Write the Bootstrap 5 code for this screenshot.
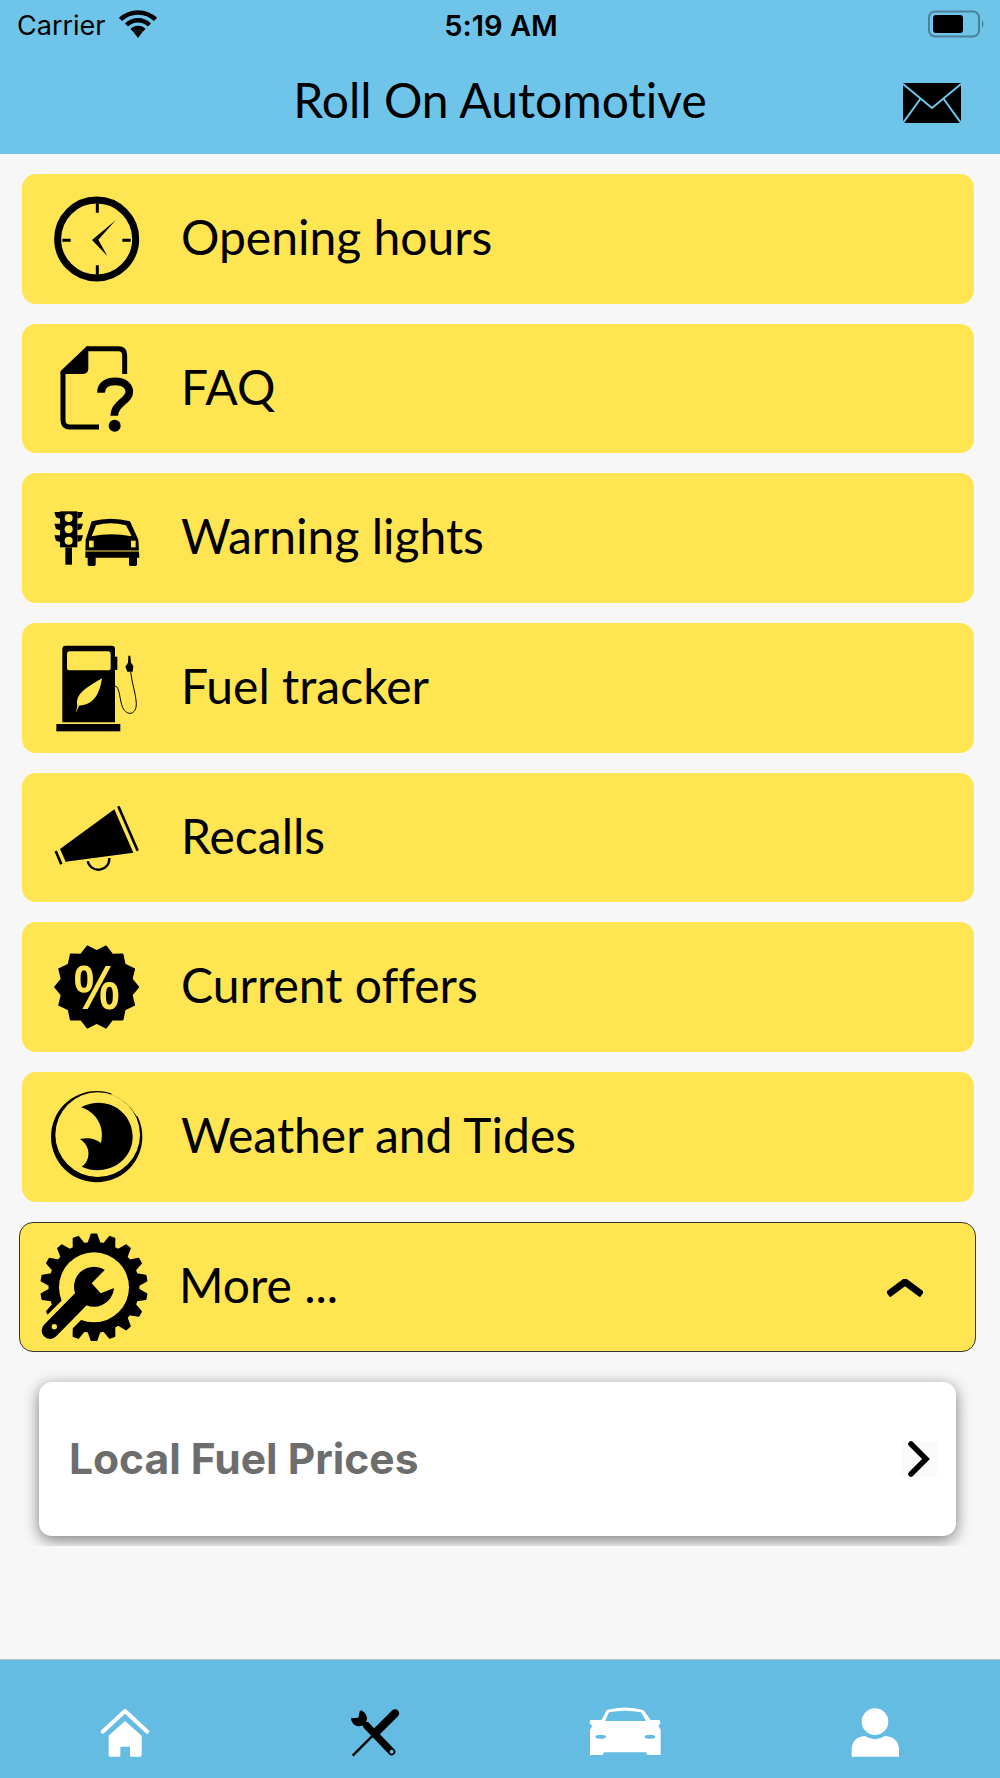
<!DOCTYPE html>
<html lang="en">
<head>
    <meta charset="UTF-8">
    <meta name="viewport" content="width=device-width, initial-scale=1">
    <title>Roll On Automotive</title>

    <!-- Bootstrap CSS -->
    <link href="https://cdn.jsdelivr.net/npm/bootstrap@5.3.0/dist/css/bootstrap.min.css" rel="stylesheet">
    <script src="https://cdn.jsdelivr.net/npm/bootstrap@5.3.0/dist/js/bootstrap.bundle.min.js"></script>

    <style>
        body {
            background-color: #f7f7f7;
            color: #000;
            font-family: "Lato", "Liberation Sans", sans-serif;
            font-variant-ligatures: none;
        }
        .app-top {
            background: #6fc5e9;
            height: 154px;
        }
        .status-row {
            height: 50px;
            padding: 0 15px 0 17px;
            font-family: "Inter", "Liberation Sans", sans-serif;
            font-size: 27px;
            line-height: 52px;
        }
        .status-row > div {
            flex: 1 1 0;
        }
        .status-time {
            font-size: 29px;
            font-weight: 600;
        }
        .status-wifi {
            margin-top: 10px;
            margin-left: 5px;
        }
        .status-batt {
            margin-top: 10px;
        }
        .title-row {
            display: grid;
            grid-template-columns: 1fr auto 1fr;
            align-items: center;
            padding-top: 22px;
        }
        .title-row h1 {
            font-size: 48px;
            font-weight: 400;
            margin: 0;
            line-height: 56px;
        }
        .title-mail {
            margin: 6px 39px 0 auto;
        }
        .menu-list {
            padding: 20px 26px 0 22px;
            gap: 20px;
        }
        .menu-row {
            height: 129.7px;
            background: #ffe552;
            border-radius: 14px;
            padding-left: 24px;
            font-size: 48px;
            gap: 35px;
        }
        .menu-row > span {
            padding-bottom: 4px;
        }
        .menu-more {
            height: 130px;
            margin: 0 -2px 0 -3px;
            border: 1px solid #333;
            padding-left: 16px;
            padding-right: 52px;
            gap: 27px;
        }
        .menu-chev {
            margin-top: 2px;
        }
        .sub-wrap {
            padding: 30px 44px 10px 39px;
            overflow: hidden;
        }
        .sub-card {
            height: 154px;
            background: #fff;
            border-radius: 13px;
            box-shadow: 0 4px 15px rgba(0, 0, 0, .5);
            padding: 0 19px 0 30px;
            color: #6d6d6d;
            font-family: "Inter", "Liberation Sans", sans-serif;
            font-weight: 700;
            font-size: 42.500px;
        }
        .chev-box {
            background: #fafafa;
        }
        .tab-bar {
            background: #65bce2;
            height: 119px;
            border-top: 1px solid #b8c4ca;
            padding-top: 45px;
        }
        .tab-item {
            flex: 1 1 0;
        }
    </style>
</head>
<body class="d-flex flex-column min-vh-100">

    <!-- Header -->
    <header class="app-top">
        <div class="status-row d-flex justify-content-between">
            <div class="d-flex align-items-start gap-2">
                <span>Carrier</span>
                <svg class="status-wifi" width="38" height="28" viewBox="0 0 38 28" fill="none" stroke="#000" stroke-width="4.500">
                    <path d="M1.500 9.500C11 0 27 0 36.500 9.500"/>
                    <path d="M7.500 15C14 8.500 24 8.500 30.500 15"/>
                    <path d="M13 20.500C16.500 17 21.500 17 25 20.500"/>
                    <path d="M14.500 22L19 19.500L23.500 22L19 28Z" fill="#000" stroke="none"/>
                </svg>
            </div>
            <div class="status-time text-center">5:19 AM</div>
            <div class="d-flex justify-content-end">
                <svg class="status-batt" width="60" height="28" viewBox="0 0 60 28">
                    <rect x="4" y="1.500" width="50" height="25" rx="6" fill="none" stroke="#4b8199" stroke-width="2"/>
                    <rect x="8" y="5" width="30" height="18" rx="3" fill="#000"/>
                    <path d="M57 10Q60 14 57 18Z" fill="#4b8199"/>
                </svg>
            </div>
        </div>
        <div class="title-row">
            <span></span>
            <h1>Roll On Automotive</h1>
            <svg class="title-mail" width="58" height="40" viewBox="0 0 58 40">
                <rect width="58" height="40" rx="1" fill="#000"/>
                <path d="M0 1L29 25L58 1M0 40L18 15M58 40L40 15" fill="none" stroke="#6fc5e9" stroke-width="2"/>
            </svg>
        </div>
    </header>

    <!-- Menu -->
    <main class="flex-grow-1">
        <div class="menu-list d-flex flex-column">
            <div class="menu-row d-flex align-items-center">
                <svg width="100" height="100" viewBox="78 57 300 300">
                    <circle cx="230" cy="207" r="117" fill="none" stroke="#000" stroke-width="21"/>
                    <path d="M232 100V128M232 286V314M127 211H152M307 211H332" stroke="#000" stroke-width="9"/>
                    <path d="M216 210L287 151L235 209L262 258Z" fill="#000"/>
                </svg>
                <span>Opening hours</span>
            </div>
            <div class="menu-row d-flex align-items-center">
                <svg width="100" height="100" viewBox="78 507 300 300">
                    <path d="M314 612V555Q314 536 295 536H200M129 605V750Q129 771 150 771H237" fill="none" stroke="#000" stroke-width="15"/>
                    <path d="M200 529L122 603V612H188Q205 612 205 595V529Z" fill="#000"/>
                    <path d="M243 668C243 642 265 634 285 634C315 634 328 650 328 665C328 692 283 700 283 737" fill="none" stroke="#000" stroke-width="23"/>
                    <circle cx="284" cy="767" r="18" fill="#000"/>
                </svg>
                <span>FAQ</span>
            </div>
            <div class="menu-row d-flex align-items-center">
                <svg width="100" height="100" viewBox="78 55 300 300">
                    <rect x="120" y="125" width="52" height="108" fill="#000"/>
                    <rect x="136" y="233" width="20" height="52" fill="#000"/>
                    <path d="M103 127H120V147L108 143ZM103 162H120V182L108 178ZM103 197H120V217L108 213ZM189 127H172V147L184 143ZM189 162H172V182L184 178ZM189 197H172V217L184 213Z" fill="#000"/>
                    <g fill="#ffe552"><circle cx="146" cy="145" r="12"/><circle cx="146" cy="179" r="12"/><circle cx="146" cy="213" r="12"/></g>
                    <path d="M215 155Q272 140 330 155L355 210L358 264H196L197 210Z" fill="#000"/>
                    <rect x="203" y="260" width="24" height="29" rx="5" fill="#000"/>
                    <rect x="327" y="260" width="24" height="29" rx="5" fill="#000"/>
                    <path d="M228 167Q272 155 318 167L335 200Q272 188 215 200Z" fill="#ffe552"/>
                    <rect x="207" y="213" width="14" height="20" fill="#ffe552"/>
                    <rect x="333" y="213" width="14" height="20" fill="#ffe552"/>
                    <path d="M196 244H358" stroke="#ffe552" stroke-width="3"/>
                </svg>
                <span>Warning lights</span>
            </div>
            <div class="menu-row d-flex align-items-center">
                <svg width="100" height="100" viewBox="78 504 300 300">
                    <path d="M137 527H275Q285 527 285 537V757H127V537Q127 527 137 527Z" fill="#000"/>
                    <rect x="141" y="544" width="131" height="57" rx="8" fill="#ffe552"/>
                    <rect x="109" y="762" width="192" height="22" fill="#000"/>
                    <path d="M246 625C240 665 225 705 177 707L168 728L172 705C165 670 205 650 246 625Z" fill="#ffe552"/>
                    <path d="M285 648C300 650 298 690 308 712C320 740 350 735 349 700C348 670 335 640 332 605" fill="none" stroke="#000" stroke-width="3"/>
                    <path d="M325 557L331 557L333 578L340 588L338 605H322L316 590L324 578Z" fill="#000"/>
                    <rect x="285" y="560" width="7" height="40" fill="#000"/>
                </svg>
                <span>Fuel tracker</span>
            </div>
            <div class="menu-row d-flex align-items-center">
                <svg width="100" height="100" viewBox="78 54 300 300">
                    <path d="M120 237L283 118L340 248L137 275Z" fill="#000"/>
                    <path d="M295 109L353 242M107 243L124 283" stroke="#000" stroke-width="8" fill="none"/>
                    <path d="M203 274A33 33 0 0 0 268 264" fill="none" stroke="#000" stroke-width="7"/>
                </svg>
                <span>Recalls</span>
            </div>
            <div class="menu-row d-flex align-items-center">
                <svg width="100" height="100" viewBox="78 504 300 300">
                    <polygon id="offerBadge" fill="#000" stroke="#000" stroke-width="5" stroke-linejoin="round"/>
                    <text transform="translate(230 720) scale(1 1.2)" text-anchor="middle" fill="#ffe552" font-family="Liberation Sans, sans-serif" font-weight="700" font-size="155">%</text>
                </svg>
                <span>Current offers</span>
            </div>
            <div class="menu-row d-flex align-items-center">
                <svg width="100" height="100" viewBox="48 54 300 300">
                    <path fill-rule="evenodd" d="M337 203A137 137 0 1 1 63 203A137 137 0 1 1 337 203ZM330 197A127 127 0 1 0 76 197A127 127 0 1 0 330 197Z" fill="#000"/>
                    <path d="M245 72Q295 90 325 140" fill="none" stroke="#ffe552" stroke-width="10"/>
                    <path d="M153 115C225 75 308 125 308 203C308 280 225 325 155 293C178 280 188 235 150 210C175 205 195 208 213 222C225 175 200 130 153 115Z" fill="#000"/>
                </svg>
                <span>Weather and Tides</span>
            </div>
            <div class="menu-row menu-more d-flex align-items-center">
                <svg width="116" height="116" viewBox="78 57 348 348">
                    <polygon id="moreGear" fill="#000" stroke="#000" stroke-width="5" stroke-linejoin="round"/>
                    <circle cx="252" cy="232" r="105" fill="#ffe552"/>
                    <path d="M200 285L100 385" stroke="#ffe552" stroke-width="82"/>
                    <circle cx="252" cy="230" r="60" fill="#000"/>
                    <path d="M212 268L120 362" stroke="#000" stroke-width="50" stroke-linecap="round"/>
                    <path d="M288 176L245 220L272 250L318 232L330 170Z" fill="#ffe552"/>
                    <circle cx="133" cy="350" r="8" fill="#ffe552"/>
                </svg>
                <span class="flex-grow-1">More ...</span>
                <svg class="menu-chev" width="36" height="18" viewBox="0 0 36 18">
                    <path d="M1 15.500L18 3L35 15.500" fill="none" stroke="#000" stroke-width="7"/>
                </svg>
            </div>
        </div>

        <div class="sub-wrap">
            <div class="sub-card d-flex align-items-center justify-content-between">
                <span>Local Fuel Prices</span>
                <svg class="chev-box" width="36" height="36" viewBox="0 0 36 36">
                    <path d="M10 3L25 18L10 33" fill="none" stroke="#000" stroke-width="5.500" stroke-linecap="round"/>
                </svg>
            </div>
        </div>
    </main>

    <!-- Tab bar -->
    <footer class="tab-bar d-flex">
        <div class="tab-item text-center">
            <svg width="80" height="60" viewBox="77 200 240 180">
                <path d="M130 280L197 218L264 280" fill="none" stroke="#fff" stroke-width="12" stroke-linecap="round" stroke-linejoin="round"/>
                <path fill-rule="evenodd" d="M197 248L247 292V350Q247 355 242 355H153Q148 355 148 350V292ZM183 325V355H212V325Z" fill="#fff"/>
            </svg>
        </div>
        <div class="tab-item text-center">
            <svg width="80" height="60" viewBox="825 200 240 180">
                <path d="M1005 225L950 280" stroke="#000" stroke-width="25" stroke-linecap="round"/>
                <path d="M950 280L878 352" stroke="#000" stroke-width="7"/>
                <path d="M920 262L995 340" stroke="#000" stroke-width="22" stroke-linecap="round"/>
                <circle cx="897" cy="240" r="24" fill="#000"/>
                <path d="M870 212L900 215L895 238L872 240Z" fill="#65bce2"/>
                <circle cx="995" cy="340" r="6" fill="#65bce2"/>
            </svg>
        </div>
        <div class="tab-item text-center">
            <svg width="80" height="60" viewBox="75 200 240 180">
                <path d="M125 245L140 215Q195 200 250 215L272 245H298Q306 255 295 262L302 275V350H262L258 342H132L128 350H90V275L97 262Q84 255 92 245Z" fill="#fff"/>
                <path d="M135 248L147 222Q195 212 243 222L258 248Z" fill="#65bce2"/>
                <ellipse cx="122" cy="295" rx="16" ry="6" fill="#65bce2"/>
                <ellipse cx="270" cy="295" rx="16" ry="6" fill="#65bce2"/>
            </svg>
        </div>
        <div class="tab-item text-center">
            <svg width="80" height="60" viewBox="825 200 240 180">
                <circle cx="945" cy="250" r="40" fill="#fff"/>
                <path d="M875 355V335Q875 297 915 293Q945 312 975 293Q1017 297 1017 335V355Z" fill="#fff"/>
            </svg>
        </div>
    </footer>

    <script>
        // badge and gear outlines, too many points to write by hand
        function polar(cx, cy, r, deg) {
            let a = deg * Math.PI / 180;
            return (cx + r * Math.cos(a)).toFixed(1) + "," + (cy + r * Math.sin(a)).toFixed(1);
        }

        let badge = [];
        for (let i = 0; i < 14; i++) {
            let step = 360 / 14;
            badge.push(polar(230, 654, 125, i * step));
            badge.push(polar(230, 654, 108, i * step + step / 2));
        }
        document.getElementById("offerBadge").setAttribute("points", badge.join(" "));

        let gear = [];
        for (let i = 0; i < 18; i++) {
            let step = 360 / 18;
            let base = i * step - 90;
            gear.push(polar(252, 232, 134, base - step * 0.36));
            gear.push(polar(252, 232, 159, base - step * 0.14));
            gear.push(polar(252, 232, 159, base + step * 0.14));
            gear.push(polar(252, 232, 134, base + step * 0.36));
        }
        document.getElementById("moreGear").setAttribute("points", gear.join(" "));
    </script>
</body>
</html>
